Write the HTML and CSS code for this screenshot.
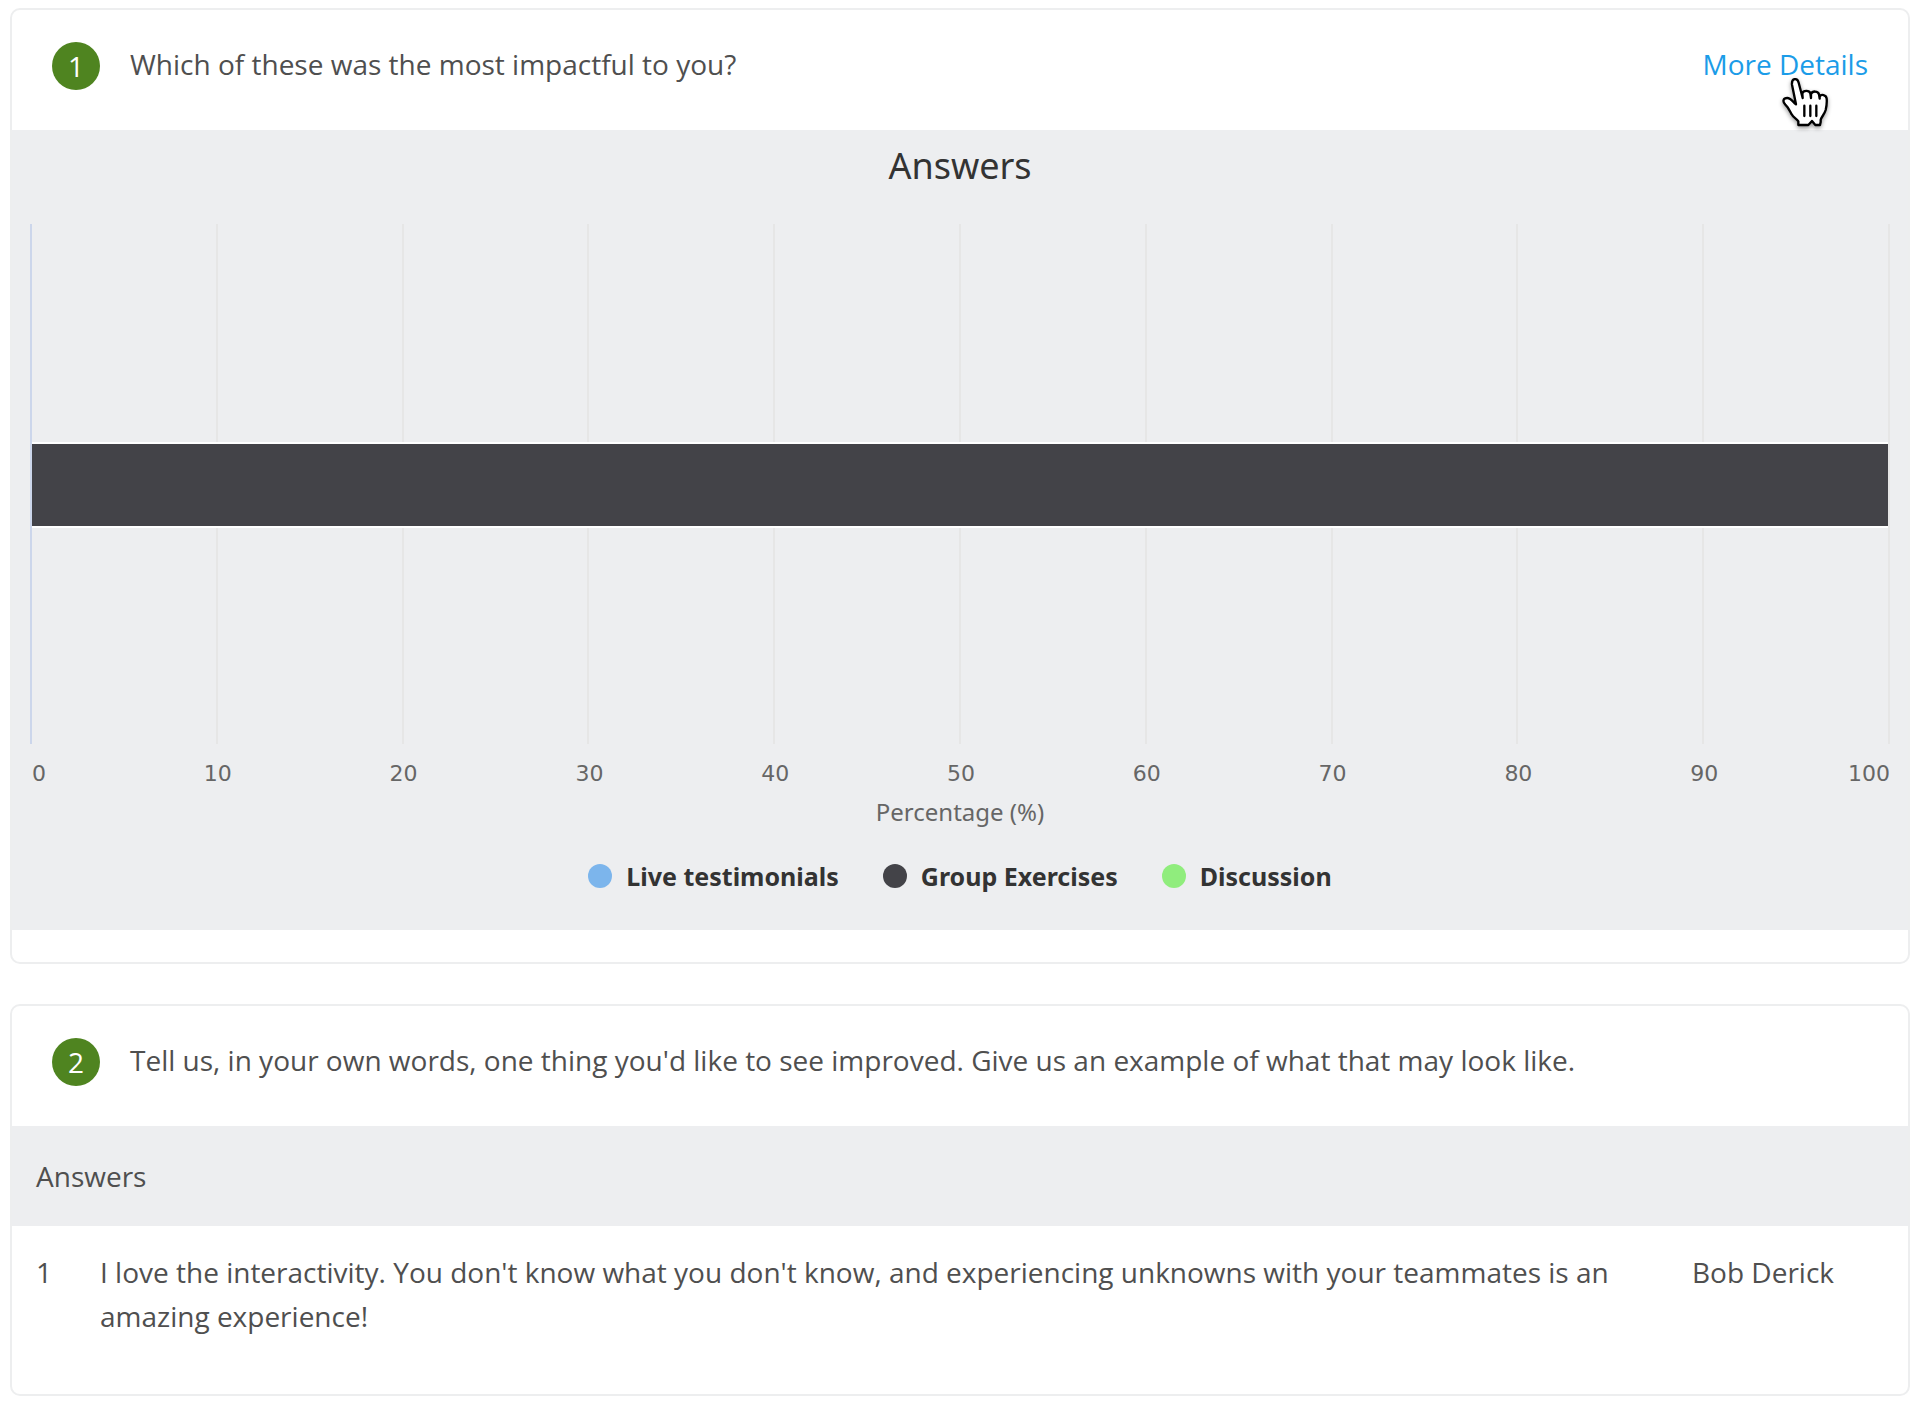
FILE: index.html
```html
<!DOCTYPE html>
<html lang="en">
<head>
<meta charset="utf-8">
<title>Survey results</title>
<meta name="viewport" content="width=device-width, initial-scale=1">
<link rel="stylesheet" href="styles.css">
</head>
<body>
<main class="results">
  <section class="card">
    <header class="card-header">
      <span class="number">1</span>
      <h2 class="question">Which of these was the most impactful to you?</h2>
      <div class="details">
        <a class="details-link" href="#details">More Details</a>
        <svg class="pointer" viewBox="0 0 210 198" aria-hidden="true">
          <path class="pointer-hand" d="M78 103 L66 44 C64 24 82 22 86 38 L98 84 L97 70 C100 60 118 60 121 70 L123 84 L123 72 C127 62 144 62 147 73 L149 86 L149 80 C153 71 169 74 170 86 C171 98 169 112 167 120 C163 134 153 142 152 150 L152 156 L150 165 L136 165 L126 153 L115 165 L85 165 L85 154 C80 146 70 143 65 133 C59 122 55 112 46 104 C36 94 40 84 52 84 C62 84 68 95 78 103 Z"/>
          <path class="pointer-lines" d="M103 107V138M121 107V138M139 107V138"/>
        </svg>
      </div>
    </header>
    <figure class="chart">
      <figcaption class="chart-title">Answers</figcaption>
      <div class="plot">
        <i class="grid-line"></i><i class="grid-line"></i><i class="grid-line"></i><i class="grid-line"></i><i class="grid-line"></i><i class="grid-line"></i><i class="grid-line"></i><i class="grid-line"></i><i class="grid-line"></i><i class="grid-line"></i>
        <div class="bar" style="width: 100%"></div>
      </div>
      <div class="ticks">
        <span>0</span><span>10</span><span>20</span><span>30</span><span>40</span><span>50</span><span>60</span><span>70</span><span>80</span><span>90</span><span>100</span>
      </div>
      <p class="axis-title">Percentage (%)</p>
      <ul class="legend">
        <li><i class="dot dot-blue"></i>Live testimonials</li>
        <li><i class="dot dot-dark"></i>Group Exercises</li>
        <li><i class="dot dot-green"></i>Discussion</li>
      </ul>
    </figure>
  </section>

  <section class="card">
    <header class="card-header">
      <span class="number">2</span>
      <h2 class="question">Tell us, in your own words, one thing you'd like to see improved. Give us an example of what that may look like.</h2>
    </header>
    <table class="answers">
      <thead>
        <tr><th colspan="3" scope="colgroup">Answers</th></tr>
      </thead>
      <tbody>
        <tr>
          <td class="col-index">1</td>
          <td class="col-text">I love the interactivity. You don't know what you don't know, and experiencing unknowns with your teammates is an amazing experience!</td>
          <td class="col-name">Bob Derick</td>
        </tr>
      </tbody>
    </table>
  </section>
</main>
</body>
</html>
```
FILE: styles.css
```css
* { box-sizing: border-box; }

body {
  margin: 0;
  background: #fff;
  color: #4f4f4f;
  font: 28px/44px "Open Sans", "Noto Sans", sans-serif;
}

.results {
  display: flex;
  flex-direction: column;
  gap: 40px;
  padding: 8px 10px 18px;
}

.card {
  padding-bottom: 32px;
  border: 2px solid #edeeef;
  border-radius: 10px;
}

.card-header {
  display: flex;
  align-items: flex-start;
  padding: 32px 40px 40px;
}

.number {
  flex: none;
  width: 48px;
  height: 48px;
  border-radius: 50%;
  background: #4f8420;
  color: #fff;
  font-weight: 500;
  line-height: 48px;
  text-align: center;
}

.question {
  flex: 1;
  margin: 0 30px;
  font-size: 28px;
  font-weight: 400;
}

.details { position: relative; }

.details-link {
  color: #1b9ce8;
  text-decoration: none;
}

.pointer {
  position: absolute;
  top: 28px;
  right: 28px;
  width: 70px;
  height: 66px;
  filter: drop-shadow(0 2px 2px rgba(0, 0, 0, 0.4));
  pointer-events: none;
}

.pointer-hand {
  fill: #fff;
  stroke: #000;
  stroke-width: 7;
  stroke-linejoin: round;
}

.pointer-lines {
  stroke: #000;
  stroke-width: 7;
  stroke-linecap: round;
}

.chart {
  margin: 0;
  padding: 14px 18px 32px;
  background: #edeef0;
  font-family: "Noto Sans", sans-serif;
}

.chart-title {
  margin-bottom: 36px;
  color: #333;
  font-size: 36px;
  text-align: center;
}

.plot {
  position: relative;
  display: grid;
  grid-template-columns: repeat(10, 1fr);
  height: 520px;
  border-left: 2px solid #ccd6eb;
}

.grid-line { border-right: 2px solid #e6e6e6; }

/* The closing grid line stays visible at the end of a full bar. */
.grid-line:last-of-type {
  position: relative;
  z-index: 1;
}

.bar {
  position: absolute;
  top: 218px;
  left: 0;
  height: 86px;
  border: solid #fff;
  border-width: 2px 0;
  background: #434348;
}

.ticks {
  display: flex;
  justify-content: space-between;
  padding: 8px 0 0 2px;
  color: #666;
  font: 22px/44px "DejaVu Sans", sans-serif;
}

.ticks span {
  display: flex;
  justify-content: center;
  width: 0;
}

.ticks span:first-child { justify-content: flex-start; }
.ticks span:last-child { justify-content: flex-end; }

.axis-title {
  margin: 0;
  color: #666;
  font-size: 24px;
  line-height: 32px;
  text-align: center;
}

.legend {
  display: flex;
  justify-content: center;
  gap: 44px;
  margin: 0;
  padding: 26px 0 0;
  color: #333;
  font-size: 25px;
  font-weight: 700;
  list-style: none;
}

.legend li {
  display: flex;
  align-items: center;
  gap: 14px;
}

.dot {
  width: 24px;
  height: 24px;
  border-radius: 50%;
}

.dot-blue { background: #7cb5ec; }
.dot-dark { background: #434348; }
.dot-green { background: #90ed7d; }

.answers {
  width: 100%;
  border-collapse: collapse;
}

.answers th {
  padding: 28px 24px;
  background: #edeef0;
  font-weight: 400;
  text-align: left;
}

.answers td {
  padding: 24px 0 24px 24px;
  vertical-align: top;
}

.answers .col-index { width: 64px; }
.answers .col-text { padding-right: 48px; }
.answers .col-name { width: 240px; }
```
